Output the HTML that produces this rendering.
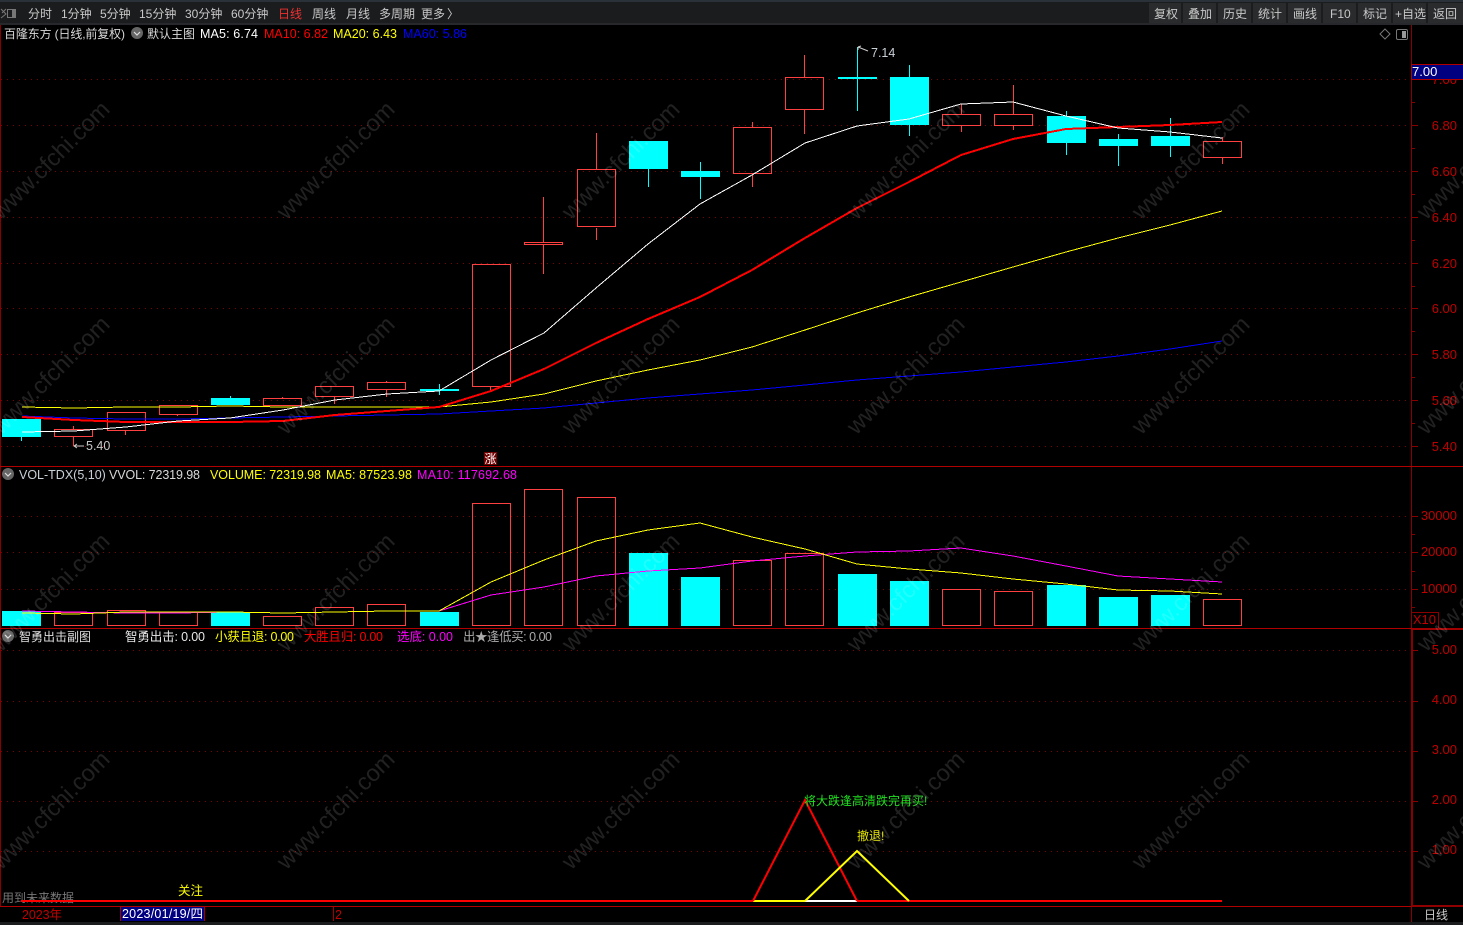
<!DOCTYPE html>
<html><head><meta charset="utf-8"><style>
html,body{margin:0;padding:0;background:#000;width:1463px;height:925px;overflow:hidden}
svg{display:block;position:absolute;left:0;top:0}
text{font-family:"Liberation Sans","Noto Sans CJK SC",sans-serif;font-size:12.5px;white-space:pre}
.c{shape-rendering:crispEdges}
.t text{fill:#c8c8c8;font-size:12px}
.ax text{fill:#c00000;font-size:13px;text-anchor:end}
.wm text{fill:#fff;fill-opacity:.13;font-size:23.5px;text-anchor:middle}
.z{font-size:12px}
</style></head><body>
<svg width="1463" height="925" viewBox="0 0 1463 925">
<rect width="1463" height="925" fill="#000"/>
<!-- top bar -->
<g class="c">
<rect width="1463" height="24" fill="#1b1c1e"/>
<rect width="1463" height="2" fill="#2b3138"/>
<rect y="23" width="1463" height="2" fill="#26282b"/>
<rect x="1149" y="3" width="32" height="20" fill="#2a2b2d"/><rect x="1183" y="3" width="33" height="20" fill="#2a2b2d"/><rect x="1218" y="3" width="33" height="20" fill="#2a2b2d"/><rect x="1253" y="3" width="33" height="20" fill="#2a2b2d"/><rect x="1288" y="3" width="33" height="20" fill="#2a2b2d"/><rect x="1323" y="3" width="33" height="20" fill="#2a2b2d"/><rect x="1358" y="3" width="33" height="20" fill="#2a2b2d"/><rect x="1393" y="3" width="33" height="20" fill="#2a2b2d"/><rect x="1428" y="3" width="35" height="20" fill="#2a2b2d"/>
</g>
<path d="M1 9l5 5-5 4M6 9l-4 4" stroke="#777" fill="none"/>
<rect x="7.5" y="9.5" width="8" height="8" fill="none" stroke="#777"/><rect x="12" y="10" width="3" height="7" fill="#777"/>
<g class="t">
<text x="28" y="18">分时</text><text x="61" y="18">1分钟</text><text x="100" y="18">5分钟</text><text x="139" y="18">15分钟</text><text x="185" y="18">30分钟</text><text x="231" y="18">60分钟</text><text x="278" y="18" style="fill:#f03030">日线</text><text x="312" y="18">周线</text><text x="346" y="18">月线</text><text x="379" y="18">多周期</text><text x="421" y="18">更多</text><text x="447" y="18">〉</text>
<text x="1154" y="18">复权</text><text x="1188" y="18">叠加</text><text x="1223" y="18">历史</text><text x="1258" y="18">统计</text><text x="1293" y="18">画线</text><text x="1330" y="18">F10</text><text x="1363" y="18">标记</text><text x="1395" y="18">+自选</text><text x="1433" y="18">返回</text>
</g>
<!-- grid -->
<g stroke="#800000" stroke-dasharray="1 5" class="c">
<path d="M1 79.5H1411M1 125.5H1411M1 171.5H1411M1 217.5H1411M1 263.5H1411M1 308.5H1411M1 354.5H1411M1 400.5H1411M1 446.5H1411M1 516.5H1411M1 552.5H1411M1 589.5H1411M1 650.5H1411M1 701.5H1411M1 751.5H1411M1 801.5H1411M1 851.5H1411"/>
</g>
<!-- axes -->
<g class="c" stroke="#8a0000" fill="none">
<path d="M0.5 25V907M1411.5 25V925"/>
<path d="M1411 125.5h7M1411 171.5h7M1411 217.5h7M1411 263.5h7M1411 308.5h7M1411 354.5h7M1411 400.5h7M1411 446.5h7M1411 102.5h4M1411 148.5h4M1411 194.5h4M1411 240.5h4M1411 286.5h4M1411 331.5h4M1411 377.5h4M1411 423.5h4M1411 516.5h7M1411 552.5h7M1411 589.5h7M1411 534.5h4M1411 571.5h4M1411 607.5h4M1411 650.5h7M1411 701.5h7M1411 751.5h7M1411 801.5h7M1411 851.5h7M1412.5 628V906"/>
<path d="M1411.5 612.5H1438.5V628"/>
</g>
<g class="c"><rect y="466" width="1463" height="1" fill="#b00000"/><rect y="628" width="1463" height="1" fill="#b00000"/><rect y="628" x="1411" width="52" height="2" fill="#a00000"/><rect y="906" width="1463" height="1" fill="#b00000"/><rect y="905" x="1411" width="52" height="2" fill="#900000"/></g>
<g class="ax">
<text x="1457" y="84">7.00</text><text x="1457" y="130">6.80</text><text x="1457" y="176">6.60</text><text x="1457" y="222">6.40</text><text x="1457" y="268">6.20</text><text x="1457" y="313">6.00</text><text x="1457" y="359">5.80</text><text x="1457" y="405">5.60</text><text x="1457" y="451">5.40</text>
<text x="1457" y="520">30000</text><text x="1457" y="556">20000</text><text x="1457" y="593">10000</text><text x="1436" y="624">X10</text>
<text x="1457" y="654">5.00</text><text x="1457" y="704">4.00</text><text x="1457" y="754">3.00</text><text x="1457" y="804">2.00</text><text x="1457" y="854">1.00</text>
</g>
<rect class="c" x="1411.5" y="64.5" width="52" height="15" fill="#000080" stroke="#b00000"/>
<text x="1412" y="76" fill="#fff" style="font-size:13px">7.00</text>
<path d="M1385 29l5 5-5 5-5-5z" fill="none" stroke="#777"/>
<rect x="1396.5" y="29.5" width="11" height="10" rx="1.5" fill="none" stroke="#777"/><rect x="1402" y="31" width="4" height="7" fill="#999"/>
<!-- candle wicks -->
<g class="c" stroke="#ff4040" fill="none">
<path d="M73.5 426V429M73.5 437V446M125.5 431V435M177.5 415V416M282.5 397V398M334.5 397V404M386.5 381V382M386.5 390V397M490.5 387V390M543.5 197V242M543.5 245V274M596.5 133V170M596.5 228V240M752.5 122V127M752.5 174V187M804.5 55V77M804.5 110V134M961.5 104V114M961.5 126V132M1013.5 85V114M1013.5 126V130M1222.5 137V141M1222.5 158V164"/>
<rect x="54.5" y="429.5" width="38" height="7"/><rect x="107.5" y="412.5" width="38" height="18"/><rect x="159.5" y="405.5" width="38" height="9"/><rect x="263.5" y="398.5" width="38" height="7"/><rect x="315.5" y="386.5" width="38" height="10"/><rect x="367.5" y="382.5" width="38" height="7"/><rect x="472.5" y="264.5" width="38" height="122"/><rect x="524.5" y="242.5" width="38" height="2"/><rect x="577.5" y="169.5" width="38" height="57"/><rect x="733.5" y="127.5" width="38" height="46"/><rect x="785.5" y="77.5" width="38" height="32"/><rect x="942.5" y="114.5" width="38" height="11"/><rect x="994.5" y="114.5" width="38" height="11"/><rect x="1203.5" y="141.5" width="38" height="16"/>
</g>
<g class="c" stroke="#00ffff" fill="none"><path d="M21.5 437V441M230.5 396V404M439.5 384V395M648.5 169V187M700.5 162V199M857.5 47V111M909.5 65V136M1066.5 111V155M1118.5 134V166M1170.5 118V157"/></g>
<g class="c" fill="#00ffff">
<rect x="2" y="419" width="39" height="18"/><rect x="211" y="398" width="39" height="7"/><rect x="420" y="389" width="39" height="2"/><rect x="629" y="141" width="39" height="28"/><rect x="681" y="171" width="39" height="6"/><rect x="838" y="77" width="39" height="2"/><rect x="890" y="77" width="39" height="48"/><rect x="1047" y="116" width="39" height="27"/><rect x="1099" y="139" width="39" height="7"/><rect x="1151" y="136" width="39" height="10"/>
</g>
<!-- MAs -->
<g fill="none" class="c">
<polyline stroke="#0000ff" stroke-width="1" points="22,416 74,418 126,419 178,419 230,418 283,417 335,416 387,415 439,414 491,411 544,408 596,403 648,398 700,394 752,390 805,385 857,380 909,376 961,372 1013,367 1066,362 1118,356 1170,349 1222,341"/>
<polyline stroke="#ffff00" stroke-width="1" points="22,407 74,408 126,407 178,407 230,406 283,407 335,407 387,407 439,407 491,402 544,394 596,381 648,370 700,360 752,347 805,330 857,313 909,297 961,282 1013,267 1066,252 1118,238 1170,225 1222,211"/>
<polyline stroke="#ff0000" stroke-width="2" points="22,417 74,420 126,422 178,422 230,422 283,421 335,415 387,411 439,407 491,391 544,369 596,343 648,319 700,297 752,270 805,238 857,208 909,182 961,155 1013,139 1066,129 1118,127 1170,125 1222,122"/>
<polyline stroke="#ffffff" stroke-width="1" points="22,432 74,431 126,427 178,421 230,418 283,410 335,400 387,394 439,391 491,360 544,333 596,288 648,244 700,204 752,175 805,143 857,126 909,119 961,104 1013,102 1066,116 1118,128 1170,132 1222,138"/>
</g>
<path d="M858 47l10 4M858 47l3-1M858 47v3" stroke="#ccc" fill="none"/>
<text x="871" y="57" fill="#c8d0d8">7.14</text>
<path d="M74 446h10M74 446l3-2M74 446l3 2" stroke="#ccc" fill="none"/>
<text x="86" y="450" fill="#c8c8c8">5.40</text>
<rect class="c" x="484" y="452" width="13" height="13" fill="#700000"/>
<text x="484.5" y="463" fill="#fff" style="font-size:12px">涨</text>
<!-- legends -->
<circle cx="137" cy="33" r="6" fill="#666"/><path d="M134 32l3 3 3-3" stroke="#ddd" fill="none" stroke-width="1.2"/>
<text x="4" y="38" fill="#d8d8d8" class="z" textLength="121">百隆东方 (日线,前复权)</text>
<text x="147" y="38" fill="#d8d8d8" class="z">默认主图</text>
<text x="200" y="38" fill="#fff" textLength="58">MA5: 6.74</text><text x="264" y="38" fill="#f00" textLength="64">MA10: 6.82</text><text x="333" y="38" fill="#ff0" textLength="64">MA20: 6.43</text><text x="403" y="38" fill="#00f" textLength="64">MA60: 5.86</text>
<!-- volume -->
<g class="c" stroke="#ff4040" fill="none">
<rect x="54.5" y="612.5" width="38" height="13"/><rect x="107.5" y="610.5" width="38" height="15"/><rect x="159.5" y="612.5" width="38" height="13"/><rect x="263.5" y="616.5" width="38" height="9"/><rect x="315.5" y="607.5" width="38" height="18"/><rect x="367.5" y="604.5" width="38" height="21"/><rect x="472.5" y="503.5" width="38" height="122"/><rect x="524.5" y="489.5" width="38" height="136"/><rect x="577.5" y="497.5" width="38" height="128"/><rect x="733.5" y="560.5" width="38" height="65"/><rect x="785.5" y="553.5" width="38" height="72"/><rect x="942.5" y="589.5" width="38" height="36"/><rect x="994.5" y="591.5" width="38" height="34"/>
<rect x="1203.5" y="599.5" width="38" height="26"/>
</g>
<g class="c" fill="#00ffff">
<rect x="2" y="611" width="39" height="15"/><rect x="211" y="612" width="39" height="14"/><rect x="420" y="612" width="39" height="14"/><rect x="629" y="553" width="39" height="73"/><rect x="681" y="577" width="39" height="49"/><rect x="838" y="574" width="39" height="52"/><rect x="890" y="581" width="39" height="45"/><rect x="1047" y="585" width="39" height="41"/><rect x="1099" y="597" width="39" height="29"/><rect x="1151" y="595" width="39" height="31"/>
</g>
<g fill="none" class="c">
<polyline stroke="#ff00ff" points="22,611 74,612 126,613 178,613 230,612 283,613 335,612 387,611 439,611 491,595 544,587 596,576 648,571 700,568 752,561 805,556 857,552 909,551 961,548 1013,556 1066,566 1118,576 1170,579 1222,582"/>
<polyline stroke="#ffff00" points="22,613 74,614 126,612 178,612 230,612 283,613 335,612 387,611 439,611 491,582 544,560 596,541 648,530 700,523 752,537 805,549 857,564 909,569 961,573 1013,579 1066,584 1118,590 1170,591 1222,594"/>
</g>
<circle cx="8" cy="474" r="6" fill="#666"/><path d="M5 473l3 3 3-3" stroke="#ddd" fill="none" stroke-width="1.2"/>
<text x="19" y="479" fill="#c8d0d8">VOL-TDX(5,10)</text><text x="109" y="479" fill="#d8d8d8" textLength="91">VVOL: 72319.98</text><text x="210" y="479" fill="#ff0" textLength="111">VOLUME: 72319.98</text><text x="326" y="479" fill="#ff0" textLength="86">MA5: 87523.98</text><text x="417" y="479" fill="#f0f" textLength="100">MA10: 117692.68</text>
<!-- sub panel -->
<circle cx="8" cy="636" r="6" fill="#666"/><path d="M5 635l3 3 3-3" stroke="#ddd" fill="none" stroke-width="1.2"/>
<text x="19" y="641" fill="#e0e0e0" class="z">智勇出击副图</text><text x="125" y="641" fill="#e8e8e8" textLength="80">智勇出击: 0.00</text><text x="215" y="641" fill="#ff0" textLength="79">小获且退: 0.00</text><text x="304" y="641" fill="#f00" textLength="79">大胜且归: 0.00</text><text x="397" y="641" fill="#f0f" textLength="56">选底: 0.00</text><text x="463" y="641" fill="#aaa" textLength="89">出★逢低买: 0.00</text>
<text x="2" y="902" fill="#777" class="z">用到未来数据</text>
<text x="178" y="895" fill="#ff0">关注</text>
<g class="c"><rect x="21" y="900" width="1201" height="2" fill="#f00"/><rect x="753" y="900" width="52" height="2" fill="#ff0"/><rect x="805" y="900" width="52" height="2" fill="#fff"/></g>
<polyline points="753,901 805,800 857,901" fill="none" stroke="#f00" stroke-width="2"/>
<polyline points="805,901 857,851 909,901" fill="none" stroke="#ff0" stroke-width="2"/>
<text x="804" y="805" fill="#20e020" class="z">将大跌逢高清跌完再买!</text>
<text x="857" y="840" fill="#e0e000" class="z">撤退!</text>
<!-- bottom -->
<g class="c">
<rect x="121" y="907" width="83" height="14" fill="#000080"/>
<path d="M120.5 907V921M204.5 907V921M333.5 907V921" stroke="#a00000"/>
<rect x="0" y="922" width="1463" height="3" fill="#1b1c1e"/>
</g>
<text x="22" y="919" fill="#c00000" textLength="40">2023年</text>
<text x="122" y="918" fill="#fff" textLength="81">2023/01/19/四</text>
<text x="335" y="919" fill="#c00000">2</text>
<text x="1424" y="919" fill="#c8c8c8" class="z">日线</text>
<!-- watermark -->
<g class="wm">
<text x="50.5" y="168" transform="rotate(-45 50.5 160)">www.cfchi.com</text><text x="335.5" y="168" transform="rotate(-45 335.5 160)">www.cfchi.com</text><text x="620.5" y="168" transform="rotate(-45 620.5 160)">www.cfchi.com</text><text x="905.5" y="168" transform="rotate(-45 905.5 160)">www.cfchi.com</text><text x="1190.5" y="168" transform="rotate(-45 1190.5 160)">www.cfchi.com</text>
<text x="50.5" y="383" transform="rotate(-45 50.5 375)">www.cfchi.com</text><text x="335.5" y="383" transform="rotate(-45 335.5 375)">www.cfchi.com</text><text x="620.5" y="383" transform="rotate(-45 620.5 375)">www.cfchi.com</text><text x="905.5" y="383" transform="rotate(-45 905.5 375)">www.cfchi.com</text><text x="1190.5" y="383" transform="rotate(-45 1190.5 375)">www.cfchi.com</text>
<text x="50.5" y="600" transform="rotate(-45 50.5 592)">www.cfchi.com</text><text x="335.5" y="600" transform="rotate(-45 335.5 592)">www.cfchi.com</text><text x="620.5" y="600" transform="rotate(-45 620.5 592)">www.cfchi.com</text><text x="905.5" y="600" transform="rotate(-45 905.5 592)">www.cfchi.com</text><text x="1190.5" y="600" transform="rotate(-45 1190.5 592)">www.cfchi.com</text>
<text x="50.5" y="818" transform="rotate(-45 50.5 810)">www.cfchi.com</text><text x="335.5" y="818" transform="rotate(-45 335.5 810)">www.cfchi.com</text><text x="620.5" y="818" transform="rotate(-45 620.5 810)">www.cfchi.com</text><text x="905.5" y="818" transform="rotate(-45 905.5 810)">www.cfchi.com</text><text x="1190.5" y="818" transform="rotate(-45 1190.5 810)">www.cfchi.com</text>
<text x="1475.5" y="168" transform="rotate(-45 1475.5 160)">www.cfchi.com</text><text x="1475.5" y="383" transform="rotate(-45 1475.5 375)">www.cfchi.com</text><text x="1475.5" y="600" transform="rotate(-45 1475.5 592)">www.cfchi.com</text><text x="1475.5" y="818" transform="rotate(-45 1475.5 810)">www.cfchi.com</text>
</g>
</svg>
</body></html>
